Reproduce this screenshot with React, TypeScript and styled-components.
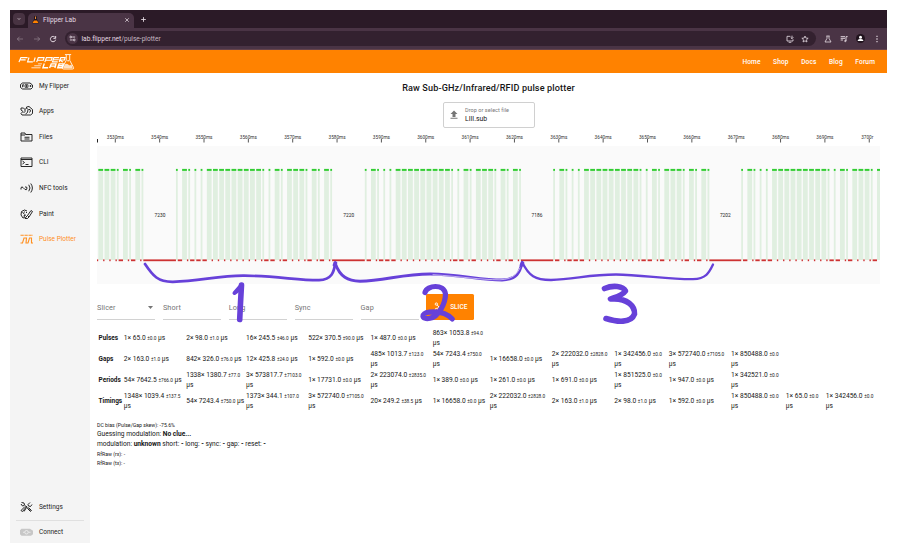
import React from 'react';
import styled, { createGlobalStyle, css } from 'styled-components';

const GlobalStyle = createGlobalStyle`
  * { box-sizing: border-box; }
  body { margin: 0; background: #fff; font-family: Roboto, "Liberation Sans", sans-serif; font-size: 6.63px; color: #161616; }
`;

const Page = styled.div`
  width: 897px;
  height: 553px;
  padding: 10px;
  background: #fff;
  overflow: hidden;
`;

const Window = styled.div`
  position: relative;
  width: 877px;
  height: 533px;
  display: flex;
  flex-direction: column;
`;

const TabStrip = styled.div`
  height: 18px;
  flex: none;
  background: #2b1a27;
  display: flex;
  align-items: flex-end;
  color: #e5dae2;
`;

const TabSearch = styled.div`
  width: 12px;
  height: 12px;
  margin: 0 3px 3px;
  border-radius: 4px;
  background: #483342;
  display: grid;
  place-items: center;
`;

const Tab = styled.div`
  width: 106px;
  height: 15px;
  padding: 0 4px 2px 4px;
  border-radius: 5px 5px 0 0;
  background: #4a3445;
  display: flex;
  align-items: center;
  gap: 4px;
  span { flex: 1; font-size: 6.7px; }
`;

const NewTab = styled.div`
  width: 19px;
  height: 18px;
  display: grid;
  place-items: center;
`;

const Toolbar = styled.div`
  height: 22px;
  flex: none;
  background: #4a3445;
  border-bottom: 1px solid #65434a;
  display: flex;
  align-items: center;
  padding: 0 6px 0 6px;
  color: #e5dae2;
`;

const NavButtons = styled.div`
  display: flex;
  gap: 8.5px;
  width: 49px;
`;

const AddressBar = styled.div`
  width: 751px;
  height: 15px;
  border-radius: 8px;
  background: #33212f;
  display: flex;
  align-items: center;
  padding: 0 7px 0 2px;
  gap: 7px;
  font-size: 6.6px;
  p { flex: 1; margin: 0 0 0 -3.5px; }
  em { font-style: normal; color: #c7b9c2; }
`;

const SiteInfo = styled.div`
  width: 11px;
  height: 11px;
  border-radius: 50%;
  background: #4a3445;
  display: grid;
  place-items: center;
`;

const BrowserActions = styled.div`
  flex: 1;
  display: flex;
  justify-content: space-between;
  align-items: center;
  padding-left: 8px;
`;

const Header = styled.header`
  height: 22.6px;
  flex: none;
  background: #ff8200;
  display: flex;
  align-items: center;
  justify-content: space-between;
  padding: 0 12px 0 8px;
  color: #fff;
`;

const HeaderNav = styled.nav`
  display: flex;
  gap: 12.5px;
  padding-top: 0.6px;
  font-weight: 500;
  font-size: 6.6px;
  letter-spacing: 0.12px;
`;

const Body = styled.div`
  flex: 1;
  min-height: 0;
  display: flex;
`;

const Sidebar = styled.aside`
  width: 80px;
  flex: none;
  background: #f4f4f4;
  display: flex;
  flex-direction: column;
`;

const SideItem = styled.div<{ $active?: boolean; $height?: number }>`
  height: ${(p) => p.$height ?? 25.6}px;
  display: flex;
  align-items: center;
  gap: 6px;
  padding-left: 10px;
  padding-top: 0.4px;
  font-size: 6.5px;
  white-space: nowrap;
  color: ${(p) => (p.$active ? '#ff8f1f' : '#1c1c1c')};
  svg { width: 13px; height: 12px; flex: none; }
`;

const Spacer = styled.div` flex: 1; `;

const Divider = styled.div`
  height: 1px;
  flex: none;
  margin: 0 6px;
  background: #e0e0e0;
`;

const Main = styled.main`
  flex: 1;
  min-width: 0;
  padding: 0 7px;
  display: flex;
  flex-direction: column;
`;

const Title = styled.h1`
  margin: 8.4px 0 0;
  height: 14px;
  line-height: 14px;
  text-align: center;
  font-size: 9.1px;
  font-weight: 500;
  letter-spacing: 0.14px;
`;

const FilePicker = styled.div`
  align-self: center;
  width: 92px;
  height: 26px;
  margin-top: 7px;
  border: 1px solid #d0d0d0;
  border-radius: 2px;
  display: flex;
  align-items: center;
  gap: 7.5px;
  padding-left: 6px;
  svg { flex: none; }
`;

const FileText = styled.div`
  display: flex;
  flex-direction: column;
  line-height: 8.8px;
  font-size: 6.8px;
  small { font-size: 5.5px; color: #777; letter-spacing: 0.06px; }
`;

const Axis = styled.div`
  height: 18px;
  svg { display: block; }
`;

const Plot = styled.div`
  height: 138px;
  background: #fafafa;
  svg { display: block; }
`;

const Controls = styled.div`
  display: flex;
  gap: 7.7px;
  margin-top: 10px;
  height: 26px;
`;

const Field = styled.div`
  width: 58.2px;
  height: 26px;
  border-bottom: 1px solid #d2d2d2;
  display: flex;
  align-items: center;
  justify-content: space-between;
  padding: 1.2px 2px 0 0;
  font-size: 7.3px;
  letter-spacing: 0.1px;
  color: #757575;
`;

const SliceButton = styled.button`
  width: 48px;
  height: 26px;
  padding: 0 7px 0 6.5px;
  border: 0;
  border-radius: 1.5px;
  background: #ff8200;
  color: #fff;
  display: flex;
  align-items: center;
  justify-content: space-between;
  font: 500 6.5px Roboto, sans-serif;
`;

const Stats = styled.div`
  margin-top: 8.3px;
  display: flex;
  flex-direction: column;
`;

const StatRow = styled.div`
  height: 21.07px;
  padding-left: 1.6px;
  display: grid;
  grid-template-columns: 25.2px 62.4px 59.8px 62.2px 62.3px 62.2px 57px 62.2px 62.5px 54.4px 62.3px 54.8px 40px 55px;
  align-items: center;
  line-height: 9.7px;
  white-space: nowrap;
  b { font-weight: 700; font-size: 6.45px; }
  small { font-size: 4.75px; }
`;

const Notes = styled.div`
  margin-top: 8.1px;
  line-height: 9.65px;
`;

const Note = styled.div<{ $small?: boolean }>`
  height: 9.65px;
  white-space: pre;
  ${(p) => p.$small && css`font-size: 5.2px;`}
`;

const Annotation = styled.svg`
  position: absolute;
  left: -10px;
  top: -10px;
  pointer-events: none;
`;

const Icon = ({ size = 8, children, w = 1.6 }: { size?: number; w?: number; children: React.ReactNode }) => (
  <svg width={size} height={size} viewBox="0 0 24 24" fill="none" stroke="currentColor" strokeWidth={w}>{children}</svg>
);

const Side = ({ children }: { children: React.ReactNode }) => (
  <svg viewBox="0 0 26 24" fill="none" stroke="currentColor" strokeWidth="1.9">{children}</svg>
);

const Logo = () => (
  <svg width="56.5" height="17.5" viewBox="0 0 59 18" fill="none" stroke="#fff" strokeWidth="1.2">
    <path d="M1 9.400 3 4.700H10M2.500 7h5.500M11.500 4.600 10 9.200h5.500M18 4.600 16.500 9.200M19.500 9.400 21.200 4.700h6l-.8 2.700h-6M28 9.400 29.700 4.700h6l-.8 2.700h-6M43 4.700h-5.500L36 9.200h5.500M37 6.900h5M43 9.400 44.700 4.700h4.500l-.7 2.500h-5l3.500 2.200" />
    <path d="M27.500 10.800 26 15.300h5.500M33 15.500l1.700-4.200h5L38.500 15.500M34 13.500h5M41.500 15.300l1.400-4h4.500l-.6 1.900h-4 4l-.7 2.100z" strokeWidth="1.4" />
    <path d="M21 11.200h4M17 13.200h7M14 15.300h9.500" strokeWidth=".8" />
    <path d="M49 1.500h6.500M50.400 2v5.500L46.500 15q-.5 1.600 1 1.600h9.500q1.500 0 1-1.600L54 7.500V2" strokeWidth=".9" />
    <path d="M49 11.700q1.800-1.500 3.500.2t3.300.1l1.400 3.800H47z" fill="#fff" fillOpacity=".75" stroke="none" />
    <circle cx="52.300" cy="8" r=".8" fill="#fff" stroke="none" />
  </svg>
);

const sideItems = [
  { label: 'My Flipper', icon: <Side><path d="M5 6h15l5 4v5l-3 3H5l-4-3V9z" /><path d="M5 9.500v5M5 9.500h3M5 12h3M10 9.500h6v5h-6zM13 9.500v5M19 12h4M21 10v4" strokeWidth="1.600" /></Side> },
  { label: 'Apps', icon: <Side><path d="M2 6h5l3 3 3-3V4l5-1 7 6v8l-4 3H4l-2-3 4-4-4-3z" /><path d="M10 9v4l-3 3M13 6l3 3-1 6-4 3M17 9h3l1 3-2 3" /></Side> },
  { label: 'Files', icon: <Side><path d="M2 20V4h8l1 3h13v13z" /><path d="M2 8h8M9 12.500h10M9 16h10" /></Side> },
  { label: 'CLI', icon: <Side><path d="M2 4h22v17H2zM2 7h22" /><path d="m5 10 4 3-4 3M11 17h6" /></Side> },
  { label: 'NFC tools', icon: <Side><path d="M2 15v-3q1-4 4-1l4 4q4 2 4-3 0-3-4-2" /><path d="M17.500 5.500q5 6.500 0 13M21.500 3q6.500 9 0 18" /></Side> },
  { label: 'Paint', icon: <Side><path d="M14 6 9 4 3 7l-1 7 4 6 3-1-1-4 4-1M5 8l4 5" /><path d="m12 18-2 3 5 0 3-3-3-3zM15 15 22 5l3 2-7 11" /><path d="M8 8h2M12 9h2" /></Side> },
  { label: 'Pulse Plotter', icon: <Side><path d="M1 4.500h25" strokeDasharray="6.500 1.500" strokeWidth="2.400" /><path d="M1 20h4l3-10h5l-1 10h4l3-10h4v10h3" strokeWidth="2.200" /></Side> },
];

/* One remote-control frame: 1 is a long pulse, 0 a short one. */
const FRAME = '01000111111111001011101010';
const BIT = 6.173;
const frameStarts = [-109.8, 78.95, 267.8, 456.2, 644.2];

const buildSignal = () => {
  const high: { x: number; w: number }[] = [];
  frameStarts.forEach((start) => {
    [...FRAME].forEach((bit, i) => {
      const x = start + i * BIT;
      if (x >= -1 && x < 783) high.push({ x, w: bit === '1' ? 4.8 : 1.8 });
    });
  });
  return high;
};

const pulses = buildSignal();
const lows = pulses.map((p, i) => ({
  x: p.x + p.w,
  end: i + 1 < pulses.length ? pulses[i + 1].x : 783,
}));
const gapLabels = [{ x: 63, t: '7230' }, { x: 251.7, t: '7220' }, { x: 440, t: '7186' }, { x: 628.3, t: '7202' }];

const TimeAxis = () => (
  <svg width="783" height="18" fontFamily="Roboto" fontSize="4.7" fill="#333">
    <path d="M.5 11v3.500" stroke="#222" />
    {Array.from({ length: 18 }, (_, i) => {
      const x = 18.3 + i * 44.35;
      return (
        <g key={i}>
          <path d={`M${x} 11v3.500`} stroke="#444" strokeWidth=".9" />
          {i < 17
            ? <text x={x} y="10.700" textAnchor="middle">{3530 + i * 10}ms</text>
            : <text x={x - 8.1} y="10.700">3700r</text>}
        </g>
      );
    })}
  </svg>
);

const SignalPlot = () => (
  <svg width="783" height="138">
    {pulses.map((p, i) => (
      <g key={i}>
        <rect x={p.x} y="25" width={p.w} height="89" fill="#e0efe0" />
        <rect x={p.x} y="22.900" width={p.w} height="2" fill="#32cd32" />
      </g>
    ))}
    <rect x="0" y="113.400" width="1.200" height="1.800" fill="#cd3232" />
    {lows.map((l, i) => (
      <rect key={i} x={l.x} y="113.400" width={Math.max(0, l.end - l.x)} height="1.800" fill="#cd3232" />
    ))}
    {gapLabels.map((g) => (
      <text key={g.t} x={g.x} y="70.500" fontSize="4.800" fontFamily="Roboto" textAnchor="middle" fill="#222">{g.t}</text>
    ))}
  </svg>
);

/* "count|value|deviation"; a trailing "|n" puts the unit on its own line. */
const stats: [string, string[]][] = [
  ['Pulses', ['1|65.0|0.0', '2|98.0|1.0', '16|245.5|46.0', '522|370.5|90.0', '1|487.0|0.0', '863|1053.8|94.0|n']],
  ['Gaps', ['2|163.0|1.0', '842|326.0|76.0', '12|425.8|24.0', '1|592.0|0.0', '485|1013.7|123.0|n', '54|7243.4|750.0|n', '1|16658.0|0.0', '2|222032.0|2828.0|n', '1|342456.0|0.0|n', '3|572740.0|7105.0|n', '1|850488.0|0.0|n']],
  ['Periods', ['54|7642.5|766.0', '1338|1380.7|77.0|n', '3|573817.7|7103.0|n', '1|17731.0|0.0', '2|223074.0|2835.0|n', '1|389.0|0.0', '1|261.0|0.0', '1|691.0|0.0', '1|851525.0|0.0|n', '1|947.0|0.0', '1|342521.0|0.0|n']],
  ['Timings', ['1348|1039.4|137.5|n', '54|7243.4|750.0', '1373|344.1|107.0|n', '3|572740.0|7105.0|n', '20|249.2|38.5', '1|16658.0|0.0', '2|222032.0|2828.0|n', '2|163.0|1.0', '2|98.0|1.0', '1|592.0|0.0', '1|850488.0|0.0|n', '1|65.0|0.0|n', '1|342456.0|0.0|n']],
];

const Stat = ({ value }: { value: string }) => {
  const [count, mean, dev, wrap] = value.split('|');
  return <span>{count}× {mean} <small>±{dev}</small>{wrap ? <br /> : ' '}µs</span>;
};

export default function App() {
  return (
    <Page>
      <GlobalStyle />
      <Window>
        <TabStrip>
          <TabSearch><Icon size={6} w={3}><path d="m7 9 5 5 5-5" /></Icon></TabSearch>
          <Tab>
            <svg width="7" height="8" viewBox="0 0 14 16"><path d="M5 1h4v5l4 8H1l4-8z" fill="#20151d" stroke="#14090f" /><path d="M4 9h6l3 5H1z" fill="#ff8200" /><path d="M6 1h2v5H6z" fill="#e88a35" /></svg>
            <span>Flipper Lab</span>
            <Icon size={6} w={3}><path d="m5 5 14 14M19 5 5 19" /></Icon>
          </Tab>
          <NewTab><Icon size={7} w={3}><path d="M12 4v16M4 12h16" /></Icon></NewTab>
        </TabStrip>
        <Toolbar>
          <NavButtons>
            <Icon w={2}><g opacity=".5"><path d="M21 12H4m7-7-7 7 7 7" /></g></Icon>
            <Icon w={2}><g opacity=".5"><path d="M3 12h17m-7-7 7 7-7 7" /></g></Icon>
            <Icon w={3}><path d="M19 8a8 8 0 1 0 1 6M20 3v7h-7" /></Icon>
          </NavButtons>
          <AddressBar>
            <SiteInfo><Icon size={7} w={3}><path d="M11 7h10M3 17h10" /><circle cx="6" cy="7" r="3" /><circle cx="18" cy="17" r="3" /></Icon></SiteInfo>
            <p>lab.flipper.net<em>/pulse-plotter</em></p>
            <Icon w={2.5}><path d="M13 4H3v14h18v-5M8 22h8M18 2v9m-4-4 4 4 4-4" /></Icon>
            <Icon w={2.4}><path d="m12 3 2.700 6.200 6.800.6-5.100 4.500 1.500 6.700-5.900-3.600L6.100 21l1.500-6.700L2.500 9.800l6.800-.6z" /></Icon>
          </AddressBar>
          <BrowserActions>
            <Icon w={2.4}><path d="M7 3h10M9 3v7L3 21h18l-6-11V3" /></Icon>
            <Icon w={2.8}><path d="M2 5h13M2 10h13M2 15h7M18 18V5h5" /><circle cx="16" cy="18" r="2" /></Icon>
            <svg width="9" height="9" viewBox="0 0 18 18"><circle cx="9" cy="9" r="9" fill="#20131d" /><circle cx="9" cy="6.500" r="3" fill="#fff" /><path d="M3.500 14v-1.500q1-2.500 5.500-2.500t5.500 2.500V14z" fill="#fff" /></svg>
            <Icon><path d="M12 2v4m0 4v4m0 4v4" strokeWidth="3.500" /></Icon>
          </BrowserActions>
        </Toolbar>
        <Header>
          <Logo />
          <HeaderNav><span>Home</span><span>Shop</span><span>Docs</span><span>Blog</span><span>Forum</span></HeaderNav>
        </Header>
        <Body>
          <Sidebar>
            {sideItems.map((s) => <SideItem key={s.label} $active={s.label === 'Pulse Plotter'}>{s.icon}{s.label}</SideItem>)}
            <Spacer />
            <SideItem>
              <Side><path d="m3 3 5 1 1 4 12 12M8 9 5 10 2 6M20 3l-4 4 1 3 4 1 3-4M14 10l-9 11-3-2 8-8M13 13l-5 8M15 15l6 6 2-2-6-6" /></Side>Settings
            </SideItem>
            <Divider />
            <SideItem $height={22}>
              <svg viewBox="0 0 26 24"><path d="M3 5.500h17l6 4v7l-4 3H3l-3-3v-8z" fill="#c7c7c7" /><circle cx="13" cy="12.500" r="3.500" fill="none" stroke="#eee" strokeWidth="1.800" /><path d="M6 12.500h3M17 12.500h4" stroke="#eee" strokeWidth="1.800" /></svg>Connect
            </SideItem>
          </Sidebar>
          <Main>
            <Title>Raw Sub-GHz/Infrared/RFID pulse plotter</Title>
            <FilePicker>
              <svg width="8" height="9" viewBox="0 0 16 18" fill="#757575"><path d="M8 1 1 8h4v6h6V8h4zM1 15.500h14v2H1z" /></svg>
              <FileText><small>Drop or select file</small><span>LIII.sub</span></FileText>
            </FilePicker>
            <Axis><TimeAxis /></Axis>
            <Plot><SignalPlot /></Plot>
            <Controls>
              <Field>Slicer<svg width="5" height="3" viewBox="0 0 10 6"><path d="M0 0h10L5 6z" fill="#757575" /></svg></Field>
              <Field>Short</Field>
              <Field>Long</Field>
              <Field>Sync</Field>
              <Field>Gap</Field>
              <SliceButton>
                <svg width="10" height="10" viewBox="0 0 24 24" fill="none" stroke="#fff" strokeWidth="2.200"><circle cx="8" cy="5" r="2.800" /><circle cx="8" cy="18" r="2.800" /><path d="m10 7 6 7M10 16l5-6" /></svg>SLICE
              </SliceButton>
            </Controls>
            <Stats>
              {stats.map(([name, values]) => (
                <StatRow key={name}><b>{name}</b>{values.map((v, i) => <Stat key={i} value={v} />)}</StatRow>
              ))}
            </Stats>
            <Notes>
              <Note $small>DC bias (Pulse/Gap skew): -75.6%</Note>
              <Note>Guessing modulation: <b>No clue...</b></Note>
              <Note>modulation: <b>unknown</b> short: <b>-</b> long: <b>-</b> sync: <b>-</b> gap: <b>-</b> reset: <b>-</b></Note>
              <Note $small>RfRaw (rx): -</Note>
              <Note $small>RfRaw (tx): -</Note>
            </Notes>
          </Main>
        </Body>
        <Annotation width="897" height="553" fill="none" stroke="#6741d9" strokeLinecap="round" strokeLinejoin="round" strokeWidth="2.700">
          <path d="M145 264C153 276 158 282 173 281.800C200 281 218 275.700 243 275.700C272 275.500 300 280.500 319 280.200C332 279.500 334 272 335.300 263" />
          <path d="M335 263C340 277 348 281 360 281.200C384 281 402 274 430 274C460 274.500 480 280 502 280C517 279.500 520 272 522 263" strokeWidth="3" />
          <path d="M522 262C529 276 535 280 551 280C575 279 590 274.500 616 274.500C642 275 670 279.500 693 279.200C706 278.500 709 273 713 264.500" strokeWidth="2.300" />
          <path d="M334.500 265 335.500 263M521.500 265 522.500 263" strokeWidth="3.600" />
          <path d="M433 274.700C460 276.300 480 279.800 500 279.800C514 279.300 517 273 520 268" stroke="#fff" strokeWidth=".7" strokeOpacity=".85" />
          <path d="M234.500 293Q239 290.500 241.500 285Z" fill="#6741d9" strokeWidth="4" />
          <path d="M241.500 285Q240.500 302 239.700 319.500" strokeWidth="5.600" />
          <path d="M425 292.500C427 285 444 283.500 445.500 294C445.500 303 439 316.500 430 318.300C421 320 420.500 313 429 312.200C438 311 447 313.500 452.300 319" strokeWidth="5.200" />
          <path d="M604.500 288.500C613 285 623 286 625.500 291C622 296 614 297.500 610.500 299C628 297.500 635 307 634.500 314C631 323.500 617 322 606 318.500" strokeWidth="5.600" />
        </Annotation>
      </Window>
    </Page>
  );
}
